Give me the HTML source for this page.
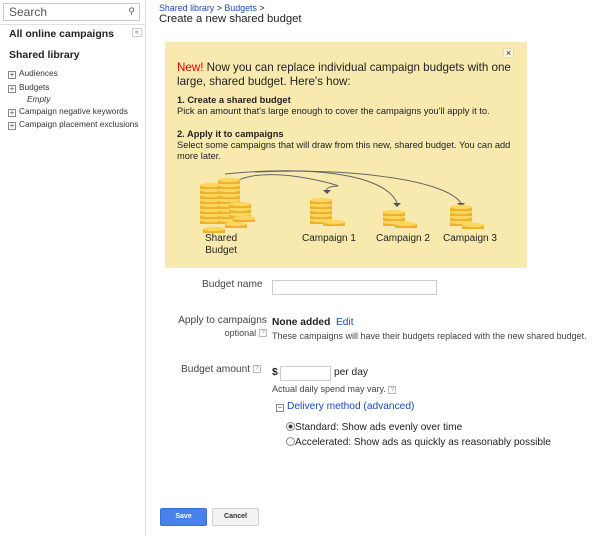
<!DOCTYPE html>
<html><head><style>
*{margin:0;padding:0;box-sizing:border-box}
body{width:600px;height:536px;background:#fff;font-family:"Liberation Sans",Arial,sans-serif;color:#222;position:relative;overflow:hidden;font-size:10px}
.a{position:absolute;white-space:nowrap}
a,.lnk{color:#1a4bb5;text-decoration:none}
.q{display:inline-block;width:8px;height:8px;border:1px solid #bbb;font-size:6px;line-height:6px;text-align:center;color:#888;vertical-align:middle}
.pl{display:inline-block;width:8px;height:8px;border:1px solid #888;font-size:8px;line-height:6px;text-align:center;color:#555;margin-right:3px;vertical-align:-1px}
</style></head><body>
<div class="a" style="left:145px;top:0;width:1px;height:536px;background:#ddd"></div>
<div class="a" style="left:3px;top:3px;width:137px;height:18px;border:1px solid #c8c8c8;font-size:12px;color:#555;padding:1px 5px">Search<span style="position:absolute;right:4px;top:2px;font-size:9px">&#9906;</span></div>
<div class="a" style="left:0;top:24px;width:145px;height:1px;background:#e0e0e0"></div>
<div class="a" style="left:9px;top:28px;font-size:10.5px;font-weight:bold">All online campaigns</div>
<div class="a" style="left:132px;top:28px;width:10px;height:9px;border:1px solid #ccc;font-size:7px;line-height:7px;text-align:center;color:#666">&laquo;</div>
<div class="a" style="left:9px;top:49px;font-size:10.5px;font-weight:bold">Shared library</div>
<div class="a" style="left:8px;top:68px;color:#333;font-size:8.3px"><span class="pl">+</span>Audiences</div>
<div class="a" style="left:8px;top:82px;color:#333;font-size:8.3px"><span class="pl">+</span>Budgets</div>
<div class="a" style="left:27px;top:94px;color:#333;font-size:8.3px;font-style:italic">Empty</div>
<div class="a" style="left:8px;top:106px;color:#333;font-size:8.3px"><span class="pl">+</span>Campaign negative keywords</div>
<div class="a" style="left:8px;top:119px;color:#333;font-size:8.3px"><span class="pl">+</span>Campaign placement exclusions</div>

<div class="a" style="left:159px;top:3px;font-size:8.9px"><a>Shared library</a> &gt; <a>Budgets</a> &gt;</div>
<div class="a" style="left:159px;top:13px;font-size:11.3px">Create a new shared budget</div>

<div class="a" style="left:165px;top:42px;width:362px;height:226px;background:#f8eaaf"></div>
<div class="a" style="left:503px;top:48px;width:11px;height:10px;background:#fbf4d8;border:1px solid #e6dcae;font-size:9px;line-height:8px;text-align:center">&#215;</div>
<div class="a" style="left:177px;top:61px;font-size:11.6px;line-height:14px"><span style="color:#d00">New!</span> Now you can replace individual campaign budgets with one<br>large, shared budget. Here's how:</div>
<div class="a" style="left:177px;top:95px;font-size:9.3px;line-height:11px"><b>1. Create a shared budget</b><br>Pick an amount that's large enough to cover the campaigns you'll apply it to.</div>
<div class="a" style="left:177px;top:129px;font-size:9.3px;line-height:11px"><b>2. Apply it to campaigns</b><br>Select some campaigns that will draw from this new, shared budget. You can add<br>more later.</div>
<svg class="a" style="left:165px;top:160px" width="362" height="80">
<defs><g id="c"><rect x="0" y="0" width="22" height="4" fill="#efb12a"/><ellipse cx="11" cy="0" rx="11" ry="2.2" fill="#fcd65e"/></g></defs>
<g fill="none" stroke="#666" stroke-width="1">
<path d="M57 42 C60 10 110 10 160 22 C 190 30 158 22 162 32"/>
<path d="M60 14 C150 5 220 15 232 43"/>
<path d="M90 12 C190 8 280 20 296 43"/>
</g>
<g fill="#555"><path d="M158 30 l4 4 l4-4z"/><path d="M228 43 l4 4 l4-4z"/><path d="M292 43 l4 4 l4-4z"/></g>
<g>
<use href="#c" x="35" y="60"/><use href="#c" x="35" y="55"/><use href="#c" x="35" y="50"/><use href="#c" x="35" y="45"/><use href="#c" x="35" y="40"/><use href="#c" x="35" y="35"/><use href="#c" x="35" y="30"/><use href="#c" x="35" y="25"/>
<use href="#c" x="53" y="60"/><use href="#c" x="53" y="55"/><use href="#c" x="53" y="50"/><use href="#c" x="53" y="45"/><use href="#c" x="53" y="40"/><use href="#c" x="53" y="35"/><use href="#c" x="53" y="30"/><use href="#c" x="53" y="25"/><use href="#c" x="53" y="20"/>
<use href="#c" x="64" y="54"/><use href="#c" x="64" y="49"/><use href="#c" x="64" y="44"/>
<use href="#c" x="60" y="64"/><use href="#c" x="38" y="69"/><use href="#c" x="68" y="58"/>
<use href="#c" x="145" y="60"/><use href="#c" x="145" y="55"/><use href="#c" x="145" y="50"/><use href="#c" x="145" y="45"/><use href="#c" x="145" y="40"/><use href="#c" x="158" y="62"/>
<use href="#c" x="218" y="62"/><use href="#c" x="218" y="57"/><use href="#c" x="218" y="52"/><use href="#c" x="230" y="64"/>
<use href="#c" x="285" y="62"/><use href="#c" x="285" y="57"/><use href="#c" x="285" y="52"/><use href="#c" x="285" y="47"/><use href="#c" x="297" y="65"/>
</g></svg>
<div class="a" style="left:205px;top:233px;font-size:10px;line-height:12px;text-align:center">Shared<br>Budget</div>
<div class="a" style="left:302px;top:233px;font-size:10px">Campaign 1</div>
<div class="a" style="left:376px;top:233px;font-size:10px">Campaign 2</div>
<div class="a" style="left:443px;top:233px;font-size:10px">Campaign 3</div>

<div class="a" style="left:202px;top:279px;font-size:10.2px;color:#444">Budget name</div>
<div class="a" style="left:272px;top:280px;width:165px;height:15px;border:1px solid #ccc"></div>
<div class="a" style="left:173px;top:315px;font-size:10.2px;color:#444;text-align:right;line-height:12px;width:94px">Apply to campaigns<br><span style="font-size:9px">optional</span> <span class="q">?</span></div>
<div class="a" style="left:272px;top:317px;font-size:10.2px"><b>None added</b> &nbsp;<a>Edit</a></div>
<div class="a" style="left:272px;top:331px;font-size:9px;color:#444">These campaigns will have their budgets replaced with the new shared budget.</div>
<div class="a" style="left:181px;top:364px;font-size:10.2px;color:#444">Budget amount <span class="q">?</span></div>
<div class="a" style="left:272px;top:367px;font-size:10.2px"><b>$</b></div>
<div class="a" style="left:280px;top:366px;width:51px;height:15px;border:1px solid #ccc"></div>
<div class="a" style="left:334px;top:367px;font-size:10.2px">per day</div>
<div class="a" style="left:272px;top:384px;font-size:9px;color:#444">Actual daily spend may vary. <span class="q">?</span></div>
<div class="a" style="left:276px;top:401px;font-size:10.2px"><span class="pl">&minus;</span><a>Delivery method (advanced)</a></div>
<div class="a" style="left:286px;top:422px;font-size:10.1px"><span style="display:inline-block;width:9px;height:9px;border:1px solid #888;border-radius:50%;vertical-align:-1px;background:radial-gradient(#335 35%,#fff 45%)"></span>Standard: Show ads evenly over time</div>
<div class="a" style="left:286px;top:437px;font-size:10.1px"><span style="display:inline-block;width:9px;height:9px;border:1px solid #888;border-radius:50%;vertical-align:-1px"></span>Accelerated: Show ads as quickly as reasonably possible</div>

<div class="a" style="left:160px;top:508px;width:47px;height:18px;background:#4a80ec;border:1px solid #3a6fd8;border-radius:2px;color:#fff;font-size:7px;font-weight:bold;text-align:center;line-height:16px">Save</div>
<div class="a" style="left:212px;top:508px;width:47px;height:18px;background:#f3f3f3;border:1px solid #d0d0d0;border-radius:2px;color:#333;font-size:7px;font-weight:bold;text-align:center;line-height:16px">Cancel</div>
</body></html>
